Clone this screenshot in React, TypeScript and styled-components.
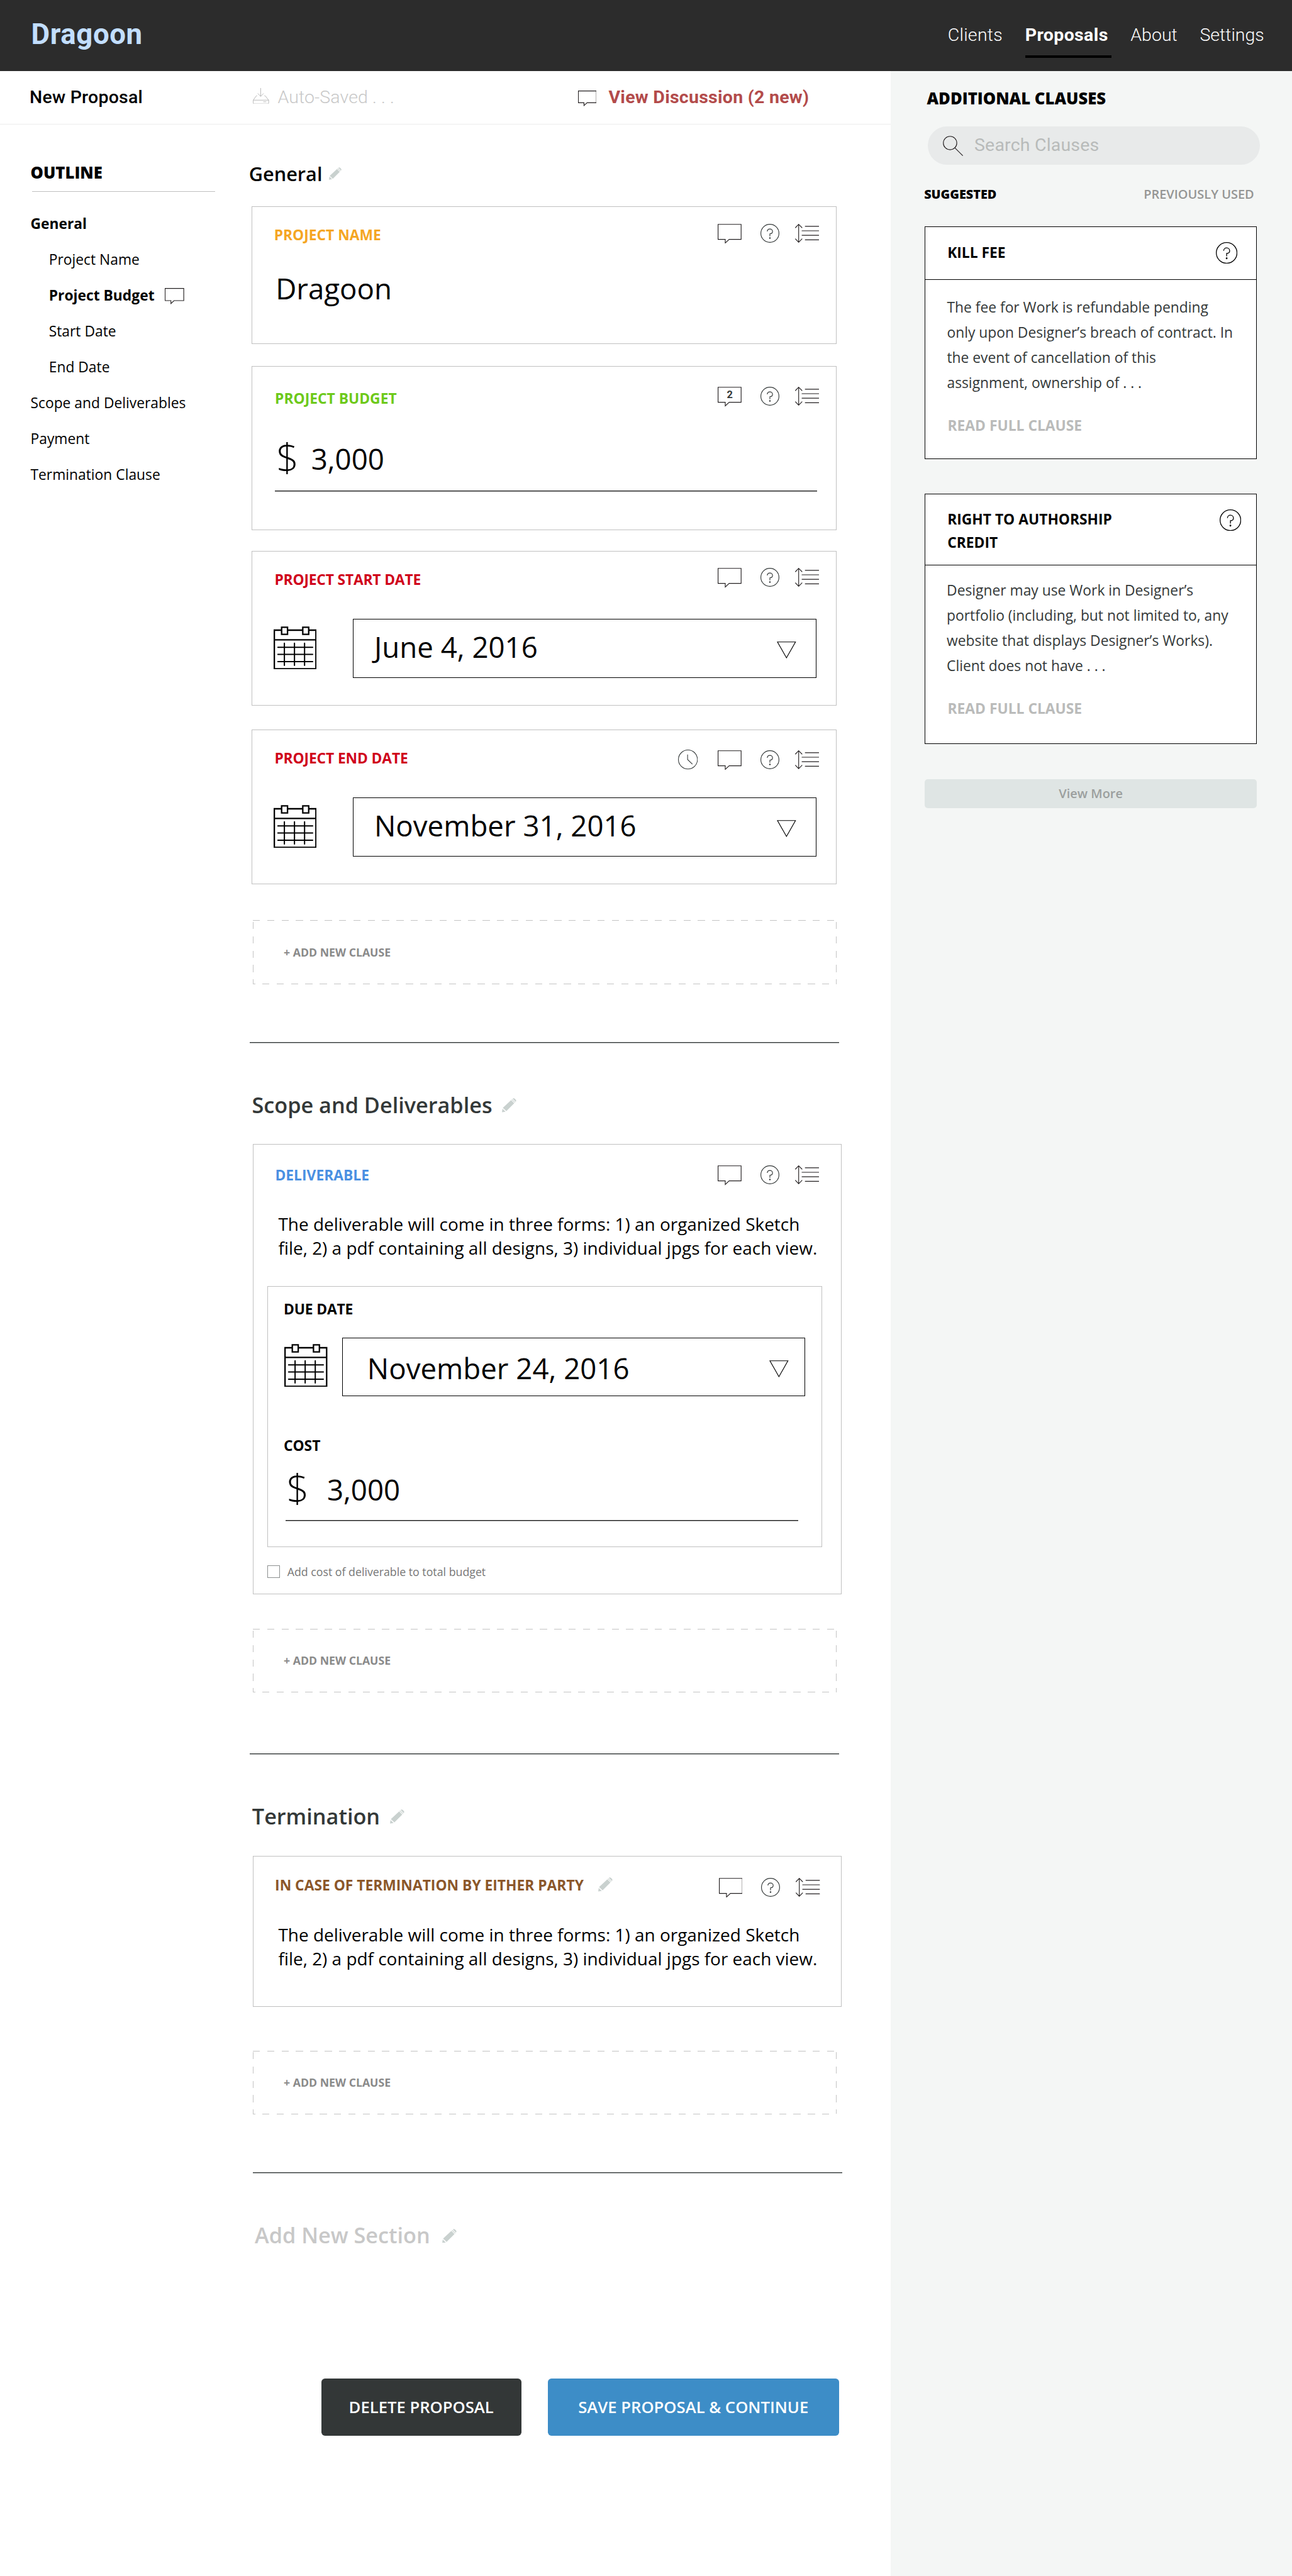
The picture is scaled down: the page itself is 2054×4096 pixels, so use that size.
import React from 'react';
import styled, { createGlobalStyle } from 'styled-components';

/* Design units are laid out on a 2880-wide artboard and scaled to the 2054-wide page. */
const u = (n: number) => `${+((n * 2054) / 2880).toFixed(3)}px`;

const sans = `'Open Sans', 'Noto Sans', sans-serif`;
const roboto = `Roboto, 'Liberation Sans', sans-serif`;

const GlobalStyle = createGlobalStyle`
  * { box-sizing: border-box; }
  body { margin: 0; background: #fff; font-family: ${sans}; color: #000; }
  h1, h2, h3, p, ul { margin: 0; padding: 0; font-weight: inherit; }
  svg { display: block; flex: none; }
`;

type TypeProps = {
  $size: number;
  $line: number;
  $weight?: number;
  $color?: string;
  $track?: number;
  $roboto?: boolean;
  $mt?: number;
  $ml?: number;
};

const Text = styled.span<TypeProps>`
  display: block;
  white-space: pre;
  font-family: ${(p) => (p.$roboto ? roboto : sans)};
  font-size: ${(p) => u(p.$size)};
  line-height: ${(p) => u(p.$line)};
  font-weight: ${(p) => p.$weight ?? 400};
  color: ${(p) => p.$color ?? '#000'};
  letter-spacing: ${(p) => u(p.$track ?? 0)};
  margin-top: ${(p) => u(p.$mt ?? 0)};
  margin-left: ${(p) => u(p.$ml ?? 0)};
`;

const Page = styled.div`
  width: ${u(2880)};
  height: 4096px;
  display: flex;
  flex-direction: column;
  overflow: hidden;
`;

const TopBar = styled.header`
  height: ${u(158)};
  flex: none;
  display: flex;
  align-items: flex-start;
  justify-content: space-between;
  background: #2c2c2c;
  padding: 0 ${u(62)} 0 ${u(69)};
`;

const Nav = styled.nav`
  display: flex;
  padding-top: ${u(54.6)};
`;

const NavItem = styled.a<{ $active?: boolean; $gap: number }>`
  height: ${u(74.7)};
  margin-left: ${(p) => u(p.$gap)};
  border-bottom: ${u(6)} solid ${(p) => (p.$active ? '#000' : 'transparent')};
  padding-right: ${(p) => (p.$active ? u(7) : 0)};
`;

const Body = styled.div`
  flex: 1;
  display: flex;
  align-items: stretch;
`;

const Workspace = styled.div`
  width: ${u(1985)};
  flex: none;
`;

const SubBar = styled.div`
  height: ${u(119.5)};
  display: grid;
  grid-template-columns: ${u(498)} ${u(724)} auto;
  padding-left: ${u(66)};
  border-bottom: ${u(2)} solid #ececec;
`;

const SubItem = styled.div`
  display: flex;
  align-items: flex-start;
`;

const IconSlot = styled.div<{ $mt?: number; $ml?: number; $mr?: number }>`
  margin-top: ${(p) => u(p.$mt ?? 0)};
  margin-left: ${(p) => u(p.$ml ?? 0)};
  margin-right: ${(p) => u(p.$mr ?? 0)};
`;

const Columns = styled.div`
  display: grid;
  grid-template-columns: ${u(556)} ${u(1429)};
`;

const Outline = styled.aside`
  padding: ${u(83.6)} ${u(76)} 0 ${u(68)};
`;

const OutlineHead = styled.div`
  margin-left: ${u(4)};
  height: ${u(66.9)};
  border-bottom: ${u(2)} solid #c0c0c0;
`;

const OutlineList = styled.ul`
  list-style: none;
  padding-top: ${u(30.8)};
`;

const OutlineItem = styled.li<{ $nested?: boolean }>`
  height: ${u(80)};
  display: flex;
  align-items: center;
  padding-left: ${(p) => (p.$nested ? u(41) : 0)};
`;

const Main = styled.main``;

const Heading = styled.div<{ $mt: number; $ml?: number }>`
  display: flex;
  align-items: flex-start;
  margin-top: ${(p) => u(p.$mt)};
  margin-left: ${(p) => u(p.$ml ?? 0)};
`;

const Card = styled.section<{ $h: number; $mt: number; $wide?: boolean }>`
  width: ${(p) => u(p.$wide ? 1312.5 : 1304.5)};
  height: ${(p) => u(p.$h)};
  margin-top: ${(p) => u(p.$mt)};
  margin-left: ${(p) => u(p.$wide ? 7.5 : 5)};
  border: ${u(2)} solid #c0c0c0;
`;

const CardHead = styled.div<{ $indent: number; $end?: number }>`
  height: ${u(110)};
  display: flex;
  align-items: flex-start;
  justify-content: space-between;
  padding: 0 ${(p) => u(p.$end ?? 38)} 0 ${(p) => u(p.$indent)};
`;

const TitleGroup = styled.div`
  display: flex;
  align-items: flex-start;
`;

const Tools = styled.div<{ $mt: number }>`
  display: flex;
  align-items: flex-start;
  margin-top: ${(p) => u(p.$mt)};
`;

const Bubble = styled.div`
  position: relative;
`;

const BubbleCount = styled(Text)`
  position: absolute;
  inset: 0 0 auto 0;
  text-align: center;
`;

const MoneyField = styled.div<{ $ml: number; $w: number; $h: number; $mt: number }>`
  display: flex;
  align-items: flex-start;
  margin-top: ${(p) => u(p.$mt)};
  margin-left: ${(p) => u(p.$ml)};
  width: ${(p) => u(p.$w)};
  height: ${(p) => u(p.$h)};
  border-bottom: 1px solid #1a1a1a;
  box-shadow: 0 1px 0 #9c9c9c;
`;

const DateRow = styled.div<{ $ml: number; $mt: number; $gap: number }>`
  display: flex;
  align-items: flex-start;
  gap: ${(p) => u(p.$gap)};
  margin-top: ${(p) => u(p.$mt)};
  margin-left: ${(p) => u(p.$ml)};
`;

const Select = styled.div`
  width: ${u(1033)};
  height: ${u(131)};
  display: flex;
  justify-content: space-between;
  align-items: flex-start;
  border: ${u(2)} solid #000;
`;

const Inset = styled.div`
  width: ${u(1236)};
  height: ${u(582)};
  margin: ${u(58)} 0 0 ${u(31.5)};
  border: ${u(2)} solid #c0c0c0;
`;

const CheckRow = styled.label`
  display: flex;
  align-items: flex-start;
  margin: ${u(40)} 0 0 ${u(31.5)};
`;

const CheckBox = styled.span`
  width: ${u(28)};
  height: ${u(28)};
  border: ${u(2)} solid #8c8f8f;
`;

const dash = (dir: string, on: number, off: number) =>
  `repeating-linear-gradient(${dir}, #c4c4c4 0 ${u(on)}, transparent ${u(on)} ${u(on + off)})`;

const AddClause = styled.button<{ $mt: number }>`
  display: block;
  width: ${u(1302)};
  height: ${u(142)};
  margin: ${(p) => u(p.$mt)} 0 0 ${u(7.5)};
  padding: 0 0 0 ${u(69)};
  border: 0;
  text-align: left;
  background-color: transparent;
  background-image: ${dash('90deg', 16, 16)}, ${dash('90deg', 16, 16)}, ${dash('180deg', 16, 16)},
    ${dash('180deg', 16, 16)};
  background-repeat: no-repeat;
  background-size: 100% 1px, calc(100% + ${u(11)}) 1px, 1px calc(100% - ${u(4)}), 1px calc(100% - ${u(4)});
  background-position: 0 0, ${u(-11)} 100%, 0 ${u(4)}, 100% ${u(4)};
`;

const Divider = styled.hr<{ $mt: number; $ml?: number }>`
  width: ${u(1314)};
  height: 2px;
  margin: ${(p) => u(p.$mt)} 0 ${u(-0.8)} ${(p) => u(p.$ml ?? 0)};
  border: 0;
  border-top: 1px solid #333838;
  border-bottom: 1px solid #a9abab;
`;

const Actions = styled.div`
  display: flex;
  gap: ${u(59)};
  margin: ${u(287.6)} 0 0 ${u(160)};
`;

const Button = styled.button<{ $w: number; $bg: string }>`
  width: ${(p) => u(p.$w)};
  height: ${u(127)};
  padding: 0;
  display: flex;
  justify-content: center;
  align-items: flex-start;
  border: 0;
  border-radius: ${u(8)};
  background: ${(p) => p.$bg};
`;

const Side = styled.aside`
  flex: 1;
  background: #f4f6f5;
  padding: ${u(39)} 0 0 ${u(76.5)};
`;

const Search = styled.div`
  width: ${u(740)};
  height: ${u(86)};
  margin: ${u(36.5)} 0 0 ${u(6.5)};
  border-radius: ${u(43)};
  background: #e8eaea;
  display: flex;
  align-items: flex-start;
  padding: ${u(18)} 0 0 ${u(34)};
`;

const Tabs = styled.div`
  width: ${u(734)};
  display: flex;
  justify-content: space-between;
  margin-top: ${u(48.2)};
`;

const Clause = styled.article<{ $mt: number; $h: number }>`
  width: ${u(740)};
  height: ${(p) => u(p.$h)};
  margin-top: ${(p) => u(p.$mt)};
  border: ${u(2)} solid #000;
  background: #fff;
`;

const ClauseHead = styled.div<{ $h: number; $end: number }>`
  height: ${(p) => u(p.$h)};
  display: flex;
  justify-content: space-between;
  align-items: flex-start;
  padding: 0 ${(p) => u(p.$end)} 0 ${u(49)};
  border-bottom: ${u(2)} solid #000;
`;

const ViewMore = styled.button`
  display: flex;
  justify-content: center;
  width: ${u(740)};
  height: ${u(64)};
  margin-top: ${u(79)};
  padding: 0;
  border: 0;
  border-radius: ${u(7)};
  background: #dfe5e4;
`;

const sz = (w: number, h: number) => ({ width: (w * 2054) / 2880, height: (h * 2054) / 2880, viewBox: `0 0 ${w} ${h}` });

const CommentIcon = ({ scale = 1 }: { scale?: number }) => (
  <svg {...sz(53 * scale, 44 * scale)} viewBox="0 0 53 44" fill="none" stroke="#231f20" strokeWidth={1.6 / scale}>
    <path d="M.8 1H52.2V34.6H25.6L16.8 42.6V34.6H.8Z" />
  </svg>
);

const HelpIcon = ({ size = 42, color = '#333838' }: { size?: number; color?: string }) => (
  <svg {...sz(size, size)} viewBox="0 0 42 42" fill="none" stroke={color} strokeWidth={1.6}>
    <circle cx="21" cy="21" r="20.2" />
    <path d="M15.2 17C15.2 13.6 17.8 11.3 21 11.3S26.9 13.8 26.9 17S24.3 22.1 21 22.1V27.6" />
    <circle cx="21" cy="31.6" r="1.7" fill={color} stroke="none" />
  </svg>
);

const ReorderIcon = () => (
  <svg {...sz(54, 42)} fill="none" stroke="#231f20" strokeWidth="1.6" strokeLinecap="round">
    <path d="M8 1V41M.8 8.4L8 1L15.4 8.4M.8 33.6L8 41L15.4 33.6" />
    <path d="M22.6 5.4H53.2M15.4 15.4H53.2M15.4 25.4H53.2M22.6 35.5H53.2" />
  </svg>
);

const ClockIcon = () => (
  <svg {...sz(44, 44)} fill="none" stroke="#333838" strokeWidth="1.5">
    <circle cx="22" cy="22" r="21.2" />
    <path d="M21.2 11V22L32 32.4" />
  </svg>
);

const CalendarIcon = () => (
  <svg {...sz(96, 96)} fill="none" stroke="#000" strokeWidth="3.2">
    <path d="M17.6 8.4H1.6V94.4H94.4V8.4H78.4M31 8.4H65M1.6 30H94.4" />
    <path d="M17.8 1.8H31V17.8H17.8ZM65 1.8H78.2V17.8H65Z" />
    <path d="M9.5 46.6H87M9.5 62.5H87M9.5 78.6H87M24 37.5V87M46.5 37.5V87M69 37.5V87" strokeLinecap="round" strokeWidth="2.8" />
  </svg>
);

const CaretIcon = () => (
  <svg {...sz(43, 38)} fill="none" stroke="#000" strokeWidth="1.6">
    <path d="M1.4 1H41.6L21.5 36.4Z" />
  </svg>
);

const PencilIcon = ({ size = 32 }: { size?: number }) => (
  <svg {...sz(size, size)} viewBox="0 0 32 32" fill="#c9d1cf">
    <path d="M0 31.6L1.2 23.8L8 30.4Z" />
    <path d="M2 21.6L20.4 4.6L27.4 11.6L9.8 29.2Z" />
    <path d="M21.4 3.6L22.6 2.5L29.4 9.4L28.4 10.5Z" />
    <path d="M23.8 1.4C25.6-.2 27.4.4 28.8 1.7L30.6 3.6C32 5.2 32.2 6.8 30.5 8.4Z" />
  </svg>
);

const SaveIcon = () => (
  <svg {...sz(36, 36)} fill="none" stroke="#b4b4b4" strokeWidth="1.3">
    <path d="M17.4 0V18.6M11 12L17.4 18.6L23.9 12M9.4 17.4H7.6L.8 27M25.6 17.4H27.6L35.2 27" />
    <path d="M.8 27H35.2V33.4Q35.2 35.2 33.4 35.2H2.6Q.8 35.2 .8 33.4ZM23.2 30.6H30" />
  </svg>
);

const SearchIcon = () => (
  <svg {...sz(46, 46)} fill="none" stroke="#231f20" strokeWidth="1.6">
    <circle cx="16" cy="16" r="15" />
    <path d="M26.4 26.4L44.4 44.4" />
  </svg>
);

const CardTools = ({ mt, count, clock }: { mt: number; count?: string; clock?: boolean }) => (
  <Tools $mt={mt}>
    {clock && <ClockIcon />}
    <IconSlot $ml={clock ? 44.5 : 0} $mt={clock ? 1 : 0}>
      <Bubble>
        <CommentIcon />
        {count && (
          <BubbleCount $size={23} $line={36} $weight={700} $color="#333838" $roboto>
            {count}
          </BubbleCount>
        )}
      </Bubble>
    </IconSlot>
    <IconSlot $ml={42} $mt={clock ? 1 : 0}>
      <HelpIcon />
    </IconSlot>
    <IconSlot $ml={35} $mt={clock ? 1 : 0}>
      <ReorderIcon />
    </IconSlot>
  </Tools>
);

type LabelProps = { children: string; color?: string; mt?: number; ml?: number; track?: number };

const Label = ({ children, color, mt = 0, ml = 0, track = 0 }: LabelProps) => (
  <Text as="h3" $size={32} $line={44} $weight={700} $color={color} $mt={mt} $ml={ml} $track={track}>
    {children}
  </Text>
);

type DateProps = { value: string; indent: number; caretEnd: number; drop?: number };

const DateSelect = ({ value, indent, caretEnd, drop = 16.6 }: DateProps) => (
  <Select>
    <Text $size={64} $line={88} $mt={drop} $ml={indent}>
      {value}
    </Text>
    <IconSlot $mt={49} $mr={caretEnd}>
      <CaretIcon />
    </IconSlot>
  </Select>
);

const Prose = () => (
  <Text as="p" $size={39.2} $line={54} $ml={55.5}>
    {'The deliverable will come in three forms: 1) an organized Sketch\nfile, 2) a pdf containing all designs, 3) individual jpgs for each view.'}
  </Text>
);

const AddNewClause = ({ mt }: { mt: number }) => (
  <AddClause $mt={mt}>
    <Text $size={24.8} $line={32} $weight={700} $color="#8a8a8a">
      + ADD NEW CLAUSE
    </Text>
  </AddClause>
);

const navItems = [
  { label: 'Clients', gap: 0, track: 0.4 },
  { label: 'Proposals', gap: 50, track: 0.5, active: true },
  { label: 'About', gap: 43, track: 0 },
  { label: 'Settings', gap: 50, track: 0 },
];

const outline = [
  { label: 'General', bold: true },
  { label: 'Project Name', nested: true },
  { label: 'Project Budget', nested: true, bold: true, comment: true },
  { label: 'Start Date', nested: true },
  { label: 'End Date', nested: true },
  { label: 'Scope and Deliverables' },
  { label: 'Payment' },
  { label: 'Termination Clause' },
];

export default function App() {
  return (
    <>
      <GlobalStyle />
      <Page>
        <TopBar>
          <Text as="h1" $roboto $size={64} $line={76} $weight={700} $color="#c2deff" $mt={38.6} $ml={0.5} $track={0.8}>
            Dragoon
          </Text>
          <Nav>
            {navItems.map((n) => (
              <NavItem key={n.label} $active={n.active} $gap={n.gap}>
                <Text $roboto $size={40} $line={48} $weight={n.active ? 700 : 300} $color="#fff" $track={n.track}>
                  {n.label}
                </Text>
              </NavItem>
            ))}
          </Nav>
        </TopBar>
        <Body>
          <Workspace>
            <SubBar>
              <Text $roboto $size={40} $line={48} $weight={500} $mt={35} $track={0.3}>
                New Proposal
              </Text>
              <SubItem>
                <IconSlot $mt={38}>
                  <SaveIcon />
                </IconSlot>
                <Text $roboto $size={40} $line={48} $weight={300} $color="#c8c8c8" $mt={35} $ml={19} $track={0.15}>
                  Auto-Saved . . .
                </Text>
              </SubItem>
              <SubItem>
                <IconSlot $mt={44}>
                  <CommentIcon scale={0.785} />
                </IconSlot>
                <Text $roboto $size={40} $line={48} $weight={700} $color="#b34b4b" $mt={35} $ml={27} $track={0.36}>
                  View Discussion (2 new)
                </Text>
              </SubItem>
            </SubBar>
            <Columns>
              <Outline>
                <OutlineHead>
                  <Text as="h2" $size={36} $line={48} $weight={800} $ml={-4}>
                    OUTLINE
                  </Text>
                </OutlineHead>
                <OutlineList>
                  {outline.map((o) => (
                    <OutlineItem key={o.label} $nested={o.nested}>
                      <Text $size={32} $line={44} $weight={o.bold ? 700 : 400}>
                        {o.label}
                      </Text>
                      {o.comment && (
                        <IconSlot $ml={23.5} $mt={3.5}>
                          <CommentIcon scale={0.81} />
                        </IconSlot>
                      )}
                    </OutlineItem>
                  ))}
                </OutlineList>
              </Outline>
              <Main>
                <Heading $mt={80.3} $ml={-1}>
                  <Text as="h2" $size={43} $line={60} $weight={600}>
                    General
                  </Text>
                  <IconSlot $ml={15} $mt={15}>
                    <PencilIcon size={28} />
                  </IconSlot>
                </Heading>
                <Card $h={308} $mt={41.7}>
                  <CardHead $indent={48.5}>
                    <Label color="#f5a623" mt={41}>
                      PROJECT NAME
                    </Label>
                    <CardTools mt={38} />
                  </CardHead>
                  <Text $size={64} $line={88} $mt={28} $ml={52}>
                    Dragoon
                  </Text>
                </Card>
                <Card $h={366} $mt={48}>
                  <CardHead $indent={50.5}>
                    <Label color="#6dc91a" mt={50}>
                      PROJECT BUDGET
                    </Label>
                    <CardTools mt={46} count="2" />
                  </CardHead>
                  <MoneyField $ml={51} $w={1208} $h={136} $mt={32}>
                    <Text $size={88} $line={120} $weight={300} $ml={2.5}>
                      $
                    </Text>
                    <Text $size={64} $line={88} $mt={20} $ml={27.5}>
                      3,000
                    </Text>
                  </MoneyField>
                </Card>
                <Card $h={345} $mt={46.5}>
                  <CardHead $indent={49.5}>
                    <Label color="#d0021b" mt={41.5} track={-0.25}>
                      PROJECT START DATE
                    </Label>
                    <CardTools mt={37.5} />
                  </CardHead>
                  <DateRow $ml={47.5} $mt={41} $gap={81}>
                    <IconSlot $mt={16}>
                      <CalendarIcon />
                    </IconSlot>
                    <DateSelect value="June 4, 2016" indent={46} caretEnd={43.5} />
                  </DateRow>
                </Card>
                <Card $h={345} $mt={53}>
                  <CardHead $indent={49.5}>
                    <Label color="#d0021b" mt={41.5} track={-0.18}>
                      PROJECT END DATE
                    </Label>
                    <CardTools mt={44.5} clock />
                  </CardHead>
                  <DateRow $ml={47.5} $mt={41} $gap={81}>
                    <IconSlot $mt={16}>
                      <CalendarIcon />
                    </IconSlot>
                    <DateSelect value="November 31, 2016" indent={46} caretEnd={43.5} />
                  </DateRow>
                </Card>
                <AddNewClause mt={81} />
                <Divider $mt={129.5} />

                <Heading $mt={106.4} $ml={5.5}>
                  <Text as="h2" $size={48} $line={64} $weight={600} $color="#333838">
                    Scope and Deliverables
                  </Text>
                  <IconSlot $ml={22} $mt={17}>
                    <PencilIcon />
                  </IconSlot>
                </Heading>
                <Card $wide $h={1005} $mt={54.1}>
                  <CardHead $indent={48.5} $end={49}>
                    <Label color="#4a90e2" mt={47.5}>
                      DELIVERABLE
                    </Label>
                    <CardTools mt={47.5} />
                  </CardHead>
                  <IconSlot $mt={40.5}>
                    <Prose />
                  </IconSlot>
                  <Inset>
                    <Label mt={28} ml={34.5} track={-0.2}>
                      DUE DATE
                    </Label>
                    <DateRow $ml={36.5} $mt={41} $gap={32}>
                      <IconSlot $mt={14}>
                        <CalendarIcon />
                      </IconSlot>
                      <DateSelect value="November 24, 2016" indent={55} caretEnd={36} drop={22} />
                    </DateRow>
                    <Label mt={88.5} ml={34.5}>
                      COST
                    </Label>
                    <MoneyField $ml={39} $w={1142} $h={135.5} $mt={10}>
                      <Text $size={88} $line={120} $weight={300} $mt={1} $ml={2}>
                        $
                      </Text>
                      <Text $size={64} $line={88} $mt={21} $ml={40}>
                        3,000
                      </Text>
                    </MoneyField>
                  </Inset>
                  <CheckRow>
                    <CheckBox />
                    <Text $size={24.9} $line={36} $color="#777" $mt={-2.5} $ml={16}>
                      Add cost of deliverable to total budget
                    </Text>
                  </CheckRow>
                </Card>
                <AddNewClause mt={76.5} />
                <Divider $mt={136} />

                <Heading $mt={106} $ml={6}>
                  <Text as="h2" $size={48} $line={64} $weight={600} $color="#333838">
                    Termination
                  </Text>
                  <IconSlot $ml={23} $mt={17}>
                    <PencilIcon />
                  </IconSlot>
                </Heading>
                <Card $wide $h={336.5} $mt={57}>
                  <CardHead $indent={48} $end={46.5}>
                    <TitleGroup>
                      <Label color="#8b572a" mt={41}>
                        IN CASE OF TERMINATION BY EITHER PARTY
                      </Label>
                      <IconSlot $ml={33} $mt={45.5}>
                        <PencilIcon />
                      </IconSlot>
                    </TitleGroup>
                    <CardTools mt={46.5} />
                  </CardHead>
                  <IconSlot $mt={36}>
                    <Prose />
                  </IconSlot>
                </Card>
                <AddNewClause mt={97} />
                <Divider $mt={129.5} $ml={7.5} />

                <Heading $mt={106.4} $ml={12}>
                  <Text as="h2" $size={48} $line={64} $weight={600} $color="#c8c8c8">
                    Add New Section
                  </Text>
                  <IconSlot $ml={27} $mt={17}>
                    <PencilIcon />
                  </IconSlot>
                </Heading>
                <Actions>
                  <Button $w={446} $bg="#333737">
                    <Text $size={36} $line={48} $weight={600} $color="#fff" $mt={40.6}>
                      DELETE PROPOSAL
                    </Text>
                  </Button>
                  <Button $w={649} $bg="#3d8dc7">
                    <Text $size={36} $line={48} $weight={600} $color="#fff" $mt={40.6}>
                      {'SAVE PROPOSAL & CONTINUE'}
                    </Text>
                  </Button>
                </Actions>
              </Main>
            </Columns>
          </Workspace>
          <Side>
            <Text as="h2" $size={36} $line={48} $weight={800} $ml={4.5}>
              ADDITIONAL CLAUSES
            </Text>
            <Search>
              <IconSlot $mt={4}>
                <SearchIcon />
              </IconSlot>
              <Text $roboto $size={40} $line={48} $color="#b8bbba" $ml={24} $track={0.25}>
                Search Clauses
              </Text>
            </Search>
            <Tabs>
              <Text $size={27.8} $line={36} $weight={800} $ml={-1.5}>
                SUGGESTED
              </Text>
              <Text $size={28} $line={36} $weight={600} $color="#949594">
                PREVIOUSLY USED
              </Text>
            </Tabs>
            <Clause $mt={52.8} $h={519}>
              <ClauseHead $h={118.5} $end={42}>
                <Label mt={35.5}>KILL FEE</Label>
                <IconSlot $mt={33.5}>
                  <HelpIcon size={48} color="#000" />
                </IconSlot>
              </ClauseHead>
              <Text as="p" $size={32} $line={56} $color="#333838" $mt={33} $ml={48}>
                {'The fee for Work is refundable pending\nonly upon Designer’s breach of contract. In\nthe event of cancellation of this\nassignment, ownership of . . .'}
              </Text>
              <Text $size={32} $line={44} $weight={700} $color="#babbba" $mt={45.5} $ml={49.5}>
                READ FULL CLAUSE
              </Text>
            </Clause>
            <Clause $mt={77} $h={558.5}>
              <ClauseHead $h={158.5} $end={33}>
                <Text as="h3" $size={32} $line={52} $weight={700} $mt={30}>
                  {'RIGHT TO AUTHORSHIP\nCREDIT'}
                </Text>
                <IconSlot $mt={34}>
                  <HelpIcon size={48} color="#000" />
                </IconSlot>
              </ClauseHead>
              <Text as="p" $size={32} $line={56} $color="#333838" $mt={28.5} $ml={47.5}>
                {'Designer may use Work in Designer’s\nportfolio (including, but not limited to, any\nwebsite that displays Designer’s Works).\nClient does not have . . .'}
              </Text>
              <Text $size={32} $line={44} $weight={700} $color="#babbba" $mt={45.5} $ml={49.5}>
                READ FULL CLAUSE
              </Text>
            </Clause>
            <ViewMore>
              <Text $size={28} $line={40} $weight={600} $color="#9b9f9e" $mt={12}>
                View More
              </Text>
            </ViewMore>
          </Side>
        </Body>
      </Page>
    </>
  );
}
